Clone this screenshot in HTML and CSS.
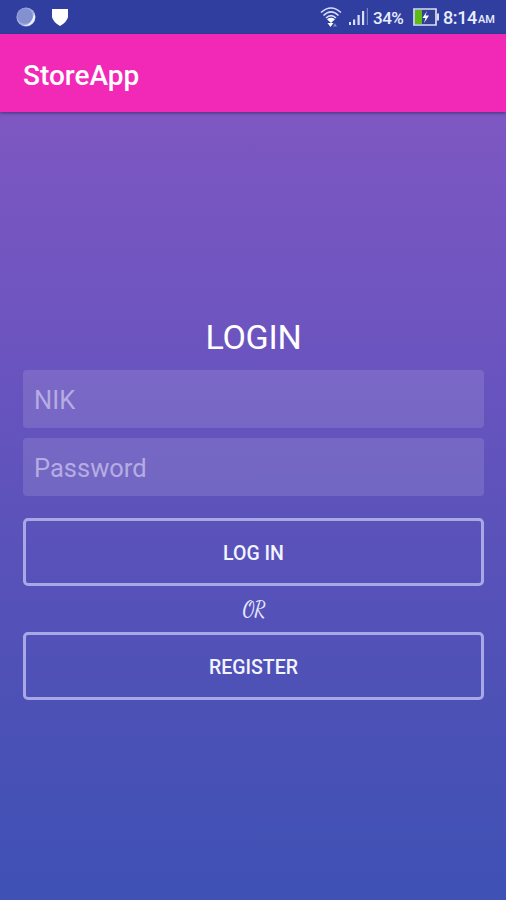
FILE: index.html
```html
<!DOCTYPE html>
<html lang="en">
<head>
<meta charset="utf-8">
<title>StoreApp</title>
<link rel="stylesheet" href="styles.css">
</head>
<body>
<div class="status">
  <svg class="orb" width="22" height="22" viewBox="0 0 22 22"><circle cx="11" cy="11" r="9.6" fill="#a3afdf"/><path d="M19 7a9 9 0 0 1-11 12.5c6 .5 10-5 11-12.5z" fill="#edf2ff"/><circle cx="10" cy="10" r="7.8" fill="#8491d0"/></svg>
  <svg class="shield" width="18" height="20" viewBox="0 0 18 20"><path d="M1 2H17V10Q16 15 9 19Q2 15 1 10z" fill="#fff"/></svg>
  <svg class="wifi" width="22" height="22" viewBox="0 0 22 22" fill="none" stroke="#d5ddfa" stroke-width="1.6"><path d="M1 6.500Q11-2.500 21 6.500M3.500 9.500Q11 2.300 18.500 9.500M6 12Q11 7.200 16 12"/><path d="M7 13.200Q11 10.500 15 13.200L11 17zM7.500 17h6l-3 4z" fill="#fff" stroke="none"/><path d="M13 20.500l2-3 2 3z" fill="#8793d3" stroke="none"/></svg>
  <svg class="signal" width="20" height="18" viewBox="0 0 20 18"><path d="M0 14h2v3H0zM4 11.500h2.200V17H4zM8.500 7h2.200v10H8.500zM13 3h2.200v14H13z" fill="#d9e0fa"/><path d="M17.800 0H19v17h-1.200z" fill="#7783c9"/></svg>
  <span class="percent">34%</span>
  <svg class="battery" width="27" height="18" viewBox="0 0 27 18"><path d="M1 1h22v16H1z" fill="#344094" stroke="#d6def2" stroke-width="1.700"/><path d="M2 2h7v14H2z" fill="#5dbb16"/><path d="M24 5.500h2v7h-2z" fill="#d6def2"/><path d="M14 3L9.500 10h3L11 15l5-7.500h-3.500z" fill="#fff"/></svg>
  <span class="time">8:14</span><span class="meridiem">AM</span>
</div>
<header class="appbar"><h1>StoreApp</h1></header>
<main class="login">
  <h2>LOGIN</h2>
  <input type="text" placeholder="NIK">
  <input type="password" placeholder="Password">
  <button class="submit">LOG IN</button>
  <div class="or"><span>OR</span></div>
  <button>REGISTER</button>
</main>
</body>
</html>
```
FILE: styles.css
```css
* { box-sizing: border-box; }
body {
  margin: 0;
  height: 900px;
  display: flex;
  flex-direction: column;
  overflow: hidden;
  color: #fff;
  font-family: Roboto, sans-serif;
  background: linear-gradient(#7e57c2 112px, #6a54bf 370px, #5b52ba 530px, #4d51b6 700px, #3f51b5 900px);
}
.status {
  height: 34px;
  flex: none;
  display: flex;
  align-items: center;
  padding: 0 9px 0 15px;
  background: #303f9f;
  color: #e9eeff;
}
.status svg { flex: none; }
.shield { margin-left: 14px; }
.wifi { margin-left: auto; }
.signal { margin-left: 7px; }
.percent { width: 32px; margin-left: 4px; padding-top: 1px; font-size: 17px; font-weight: 500; letter-spacing: -.5px; white-space: nowrap; }
.battery { margin-left: 8px; }
.time { width: 34px; margin-left: 3px; padding-top: 1px; font-size: 18px; font-weight: 500; letter-spacing: -.4px; }
.meridiem { width: 19px; margin-left: 1px; padding-top: 5px; font-size: 11px; font-weight: 500; }
.appbar {
  height: 78px;
  flex: none;
  display: flex;
  align-items: center;
  padding: 5px 23px 0;
  background: #f229b6;
  box-shadow: 0 1px 3px rgba(30, 30, 80, .65);
}
h1 { margin: 0; font-size: 28px; line-height: 32px; font-weight: 500; }
.login {
  display: flex;
  flex-direction: column;
  padding: 205px 22px 0 23px;
}
h2 { margin: 0 0 13px; font-size: 34px; line-height: 40px; font-weight: 400; letter-spacing: -.3px; text-align: center; }
input {
  height: 58px;
  margin: 0 0 10px;
  padding: 1px 11px 0;
  border: 0;
  border-radius: 4px;
  background: rgba(255, 255, 255, .12);
  color: #fff;
  font: 25.5px Roboto, sans-serif;
}
input::placeholder { color: #b5ace3; opacity: 1; }
button {
  height: 68px;
  padding: 2px 0 0;
  border: 3px solid #a9a8e6;
  border-radius: 5px;
  background: none;
  color: #f2f4ff;
  font: 500 19.5px Roboto, sans-serif;
}
.submit { margin-top: 12px; }
.or {
  height: 46px;
  display: flex;
  align-items: center;
  justify-content: center;
  color: #e6e9ff;
  font: 700 22px "Dancing Script", "Liberation Serif", serif;
}
.or span { transform: scaleX(.82); }
```
